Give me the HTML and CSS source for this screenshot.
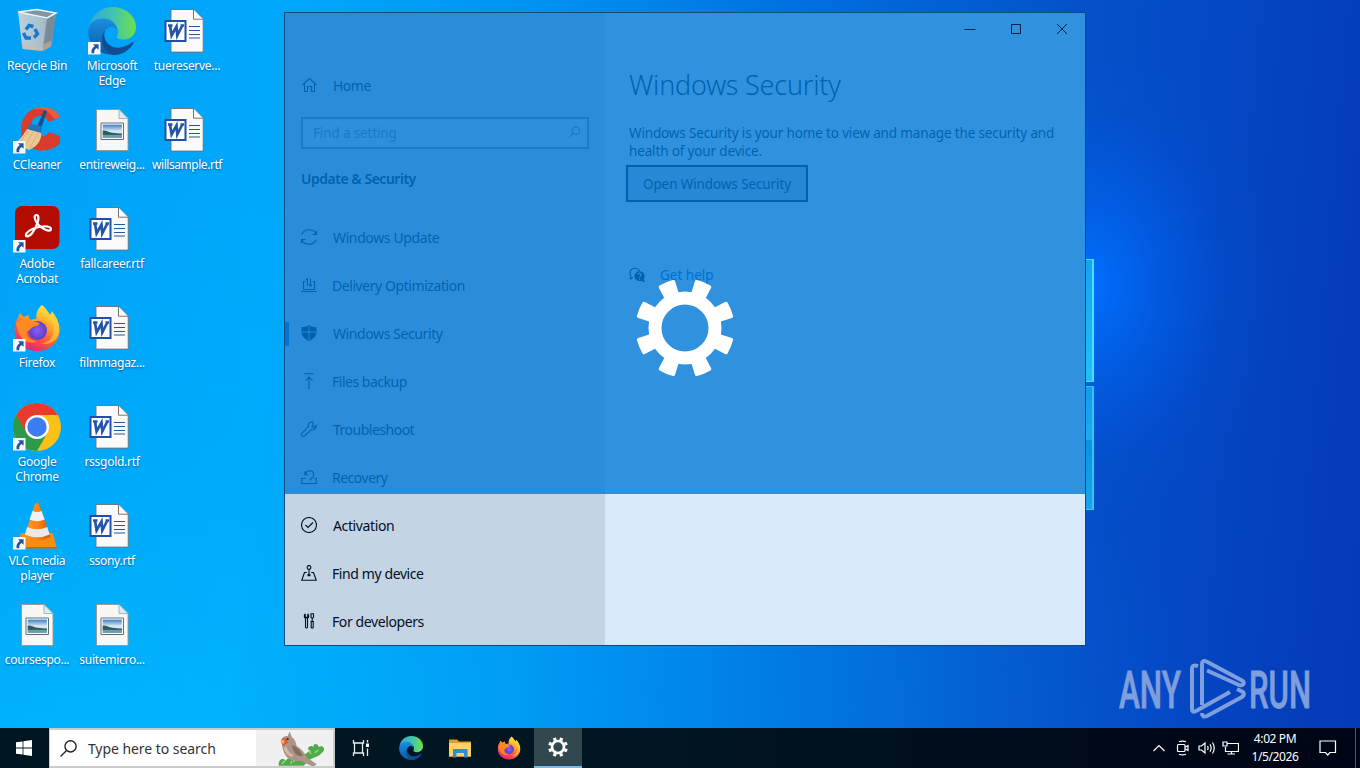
FILE: index.html
```html
<!DOCTYPE html>
<html lang="en">
<head>
<meta charset="utf-8">
<title>Desktop</title>
<link rel="stylesheet" href="styles.css">
</head>
<body>
<svg class="defs" width="0" height="0">
  <defs>
    <linearGradient id="edgeA" x1="0" y1="0" x2="1" y2="0"><stop offset="0" stop-color="#2fa8dc"/><stop offset=".5" stop-color="#3fc3b0"/><stop offset="1" stop-color="#6fe04c"/></linearGradient>
    <linearGradient id="edgeB" x1="0" y1="0" x2="0" y2="1"><stop offset="0" stop-color="#1b8de2"/><stop offset="1" stop-color="#0c59a4"/></linearGradient>
    <linearGradient id="fox" x1=".8" y1="0" x2=".3" y2="1"><stop offset="0" stop-color="#fff04a"/><stop offset=".35" stop-color="#ffb02a"/><stop offset=".65" stop-color="#ff5b36"/><stop offset="1" stop-color="#e5207c"/></linearGradient>
    <radialGradient id="globe"><stop offset="0" stop-color="#8f5cf5"/><stop offset="1" stop-color="#5a3ec8"/></radialGradient>
    <linearGradient id="cone" x1="0" y1="0" x2="1" y2="0"><stop offset="0" stop-color="#ff9a1c"/><stop offset=".5" stop-color="#ff8410"/><stop offset="1" stop-color="#c95a06"/></linearGradient>
    <linearGradient id="sky" x1="0" y1="0" x2="0" y2="1"><stop offset="0" stop-color="#3d7fc4"/><stop offset=".5" stop-color="#dceaf3"/><stop offset="1" stop-color="#9cc4d8"/></linearGradient>
    <linearGradient id="bin" x1="0" y1="0" x2="1" y2="0"><stop offset="0" stop-color="#c9d3da"/><stop offset=".65" stop-color="#b5c0c9"/><stop offset="1" stop-color="#8796a3"/></linearGradient>
  </defs>
  <symbol id="arrow" viewBox="0 0 13 13">
    <path d="M0 0h12.500v12.500H0z" fill="#f6f8fa"/>
    <path d="M5 2.200h5.600v5.600L8.700 5.900C6.500 7.300 6 8.800 6.300 11.200H3.600C2.900 8.300 4.200 5.900 6.800 4z" fill="#24549c"/>
  </symbol>
  <symbol id="word" viewBox="0 0 48 48">
    <path d="M8 2.500h22.500l9.700 9.700v32.900H8z" fill="#fafafa" stroke="#6b6f74" stroke-width=".9"/>
    <path d="M30.500 2.500v9.700h9.700" fill="#fff" stroke="#70605f" stroke-width=".9"/>
    <path d="M26 19.500h11M26 23.500h11M26 27.500h11M26 31h11" stroke="#2a5699" stroke-width="1.200"/>
    <path d="M2.500 14h20v20h-20z" fill="#fff" stroke="#1f4fa8" stroke-width="2"/>
    <path d="M5 18.500h4.500M7 18.500l1.600 10L13.500 19.500l.8 9 5-10M17.500 18.500h3.500" fill="none" stroke="#2455a8" stroke-width="2.700"/>
  </symbol>
  <symbol id="picture" viewBox="0 0 48 48">
    <path d="M8.500 3.500h22.500l9 9v32H8.500z" fill="#f8f7f6" stroke="#9c948c" stroke-width=".9"/>
    <path d="M31 3.500l9 9h-9z" fill="#ddeaf0" stroke="#8eb3c0" stroke-width=".9"/>
    <path d="M13 17h22.500v16.500H13z" fill="#fff" stroke="#5d6d7c" stroke-width="1"/>
    <path d="M14.700 18.600h19.200v13.300H14.700z" fill="url(#sky)"/>
    <path d="M14.700 24.500c4-.4 6 2 9.500 2.300 3.500.4 6 .8 9.700.8v1.300H14.700z" fill="#2c5f58"/>
    <path d="M14.700 28.900h19.200v3H14.700z" fill="#6d9bb5"/>
  </symbol>
  <symbol id="edge" viewBox="0 0 48 48">
    <path d="M1 21C3 8 13 0 24.500 0 38 0 48 9.500 48 20c0 8-6 12.500-12 12.500-4 0-8-1.200-7-3.300 2.200-4.700 1-11-5-12.800C14 13.300 5 14 1 21z" fill="url(#edgeA)"/>
    <path d="M.3 24C1 15 8.500 11 16 11.500c8 .5 13 6 13 11.500-2-4-9-5-12 1-4 8 3 20 13 22.500-3 1-6 1.300-9 1C8.500 46 0 36 .3 24z" fill="url(#edgeB)"/>
    <path d="M17 23c-3.500 11 6 19 15 17.500 5-.7 9-2.700 12-5.300 1-.8 2 0 1.300 1.200C41 44 33 48 25.500 48 16 46 10.500 34 17 23z" fill="#114c93"/>
  </symbol>
  <symbol id="firefox" viewBox="0 0 48 48">
    <path d="M29 1c4 3 6 6.500 7.500 10 2-1 2-3 2-4C44 13 47 20 46.500 27 46 39 36 47 24 47S1.500 38 1.500 26c0-6 1.500-10 4-13l.5-3.500c2 .5 3.500 1.800 4.500 3.500l5-2c0 2 1 3.500 2 5 2-.5 4-1 6-1C22.500 10 25 4 29 1z" fill="url(#fox)"/>
    <circle cx="24.500" cy="26.500" r="9.500" fill="url(#globe)"/>
    <path d="M3 19c5-4 12-4 16-1 3-.5 7 0 7.500 2-1 2-5 2-7 3.200-2 1.300-3 4-6 3.800-.5 5 3.500 10 10.500 10.500C13 41 6 35 3 19z" fill="#ff8a24"/>
    <path d="M24 16c5-2 11 2 12 8-1-2-3-4-5-4-2-2-4-3-7-4z" fill="#ff9d2e"/>
    <path d="M30 2c1 8 11 13 11 23 0 8-6 14-13 15 12 1 18-6 18-15C46 14 35 10 30 2z" fill="#ffd23b" opacity=".65"/>
  </symbol>
  <symbol id="gear" viewBox="-50 -50 100 100">
    <circle r="30" fill="none" stroke="currentColor" stroke-width="13"/>
    <g fill="currentColor">
      <path id="tooth" d="M-7.500-34L-8.700-47q-.2-1.800 1.500-2Q0-50 7.200-49q1.700.2 1.500 2L7.500-34z" transform="rotate(22.500)"/>
      <use href="#tooth" transform="rotate(45)"/><use href="#tooth" transform="rotate(90)"/><use href="#tooth" transform="rotate(135)"/><use href="#tooth" transform="rotate(180)"/><use href="#tooth" transform="rotate(225)"/><use href="#tooth" transform="rotate(270)"/><use href="#tooth" transform="rotate(315)"/>
    </g>
  </symbol>
</svg>

<div class="screen">
  <div class="panes"><i></i><i></i></div>

  <main class="workspace">
    <div class="icons">
      <div class="item"><svg class="pic" viewBox="0 0 48 48">
        <path d="M5 5l4.500 37 20 2 9-4.500L43 7 34 12z" fill="url(#bin)" opacity=".93"/><path d="M34 12l9-5-4.500 32.500-9 4.500z" fill="#788b9b"/>
        <path d="M5 5L24 2.500 43 6l-9 5z" fill="#7f97a5" stroke="#f0f4f6" stroke-width="1.500"/>
        <path d="M9.500 37l20.500 3 .8-3 8-3.500-.8 6-8.500 4.500-19.500-2z" fill="#d9b99c" opacity=".5"/>
        <g fill="none" stroke="#1978c8" stroke-width="3.400"><path d="M13 22.500l3-4 4.500 1M22 22l2.500 5-3.500 3.500M18 31h-5l-2.500-5"/></g></svg><span>Recycle Bin</span></div>
      <div class="item"><svg class="pic" viewBox="0 0 48 48"><path d="M47 11C42 1 29-2 19 4 7 10 5 27 12 37c7 9 25 11 35 0v-7l-11-4c-3 6-13 6-16-1-4-7 0-15 7-15 4 0 7 2 9 6z" fill="#d93b2d"/><path d="M47 11C42 1 29-2 19 4c9-3 17 0 22 9z" fill="#ee5b43"/><path d="M31 4l3 1-6 18-4-2z" fill="#174f85"/><path d="M16 18l13 2-1 7-14-3z" fill="#2574b8"/><path d="M14 23l14 4c1 8-5 14-12 17L1 37c7-3 9-8 13-14z" fill="#eac795"/><path d="M16 25L5 38M20 26l-9 15M25 27l-8 15" stroke="#d3ac78" stroke-width=".8"/></svg><svg class="link"><use href="#arrow"/></svg><span>CCleaner</span></div>
      <div class="item"><svg class="pic" viewBox="0 0 48 48"><rect x="2" y="1" width="44.500" height="43" rx="7" fill="#b30b00"/><path d="M13 31c-1-4 7-8 13-9 6-1 12-1 12 2 0 4-10 0-14-6-3-4-3-8-.5-8s2.500 5 .5 9c-2 6-7 14-11 12z" fill="none" stroke="#fff" stroke-width="2.200"/></svg><svg class="link"><use href="#arrow"/></svg><span>Adobe Acrobat</span></div>
      <div class="item"><svg class="pic"><use href="#firefox"/></svg><svg class="link"><use href="#arrow"/></svg><span>Firefox</span></div>
      <div class="item"><svg class="pic" viewBox="0 0 48 48"><circle cx="24" cy="24" r="24" fill="#fbc116"/><path d="M3.200 12A24 24 0 0 0 24 48l10.400-18z" fill="#2d9a48"/><path d="M3.200 12A24 24 0 0 1 44.800 12H24l-10.400 18z" fill="#ea3a2e"/><circle cx="24" cy="24" r="12" fill="#fff"/><circle cx="24" cy="24" r="9.700" fill="#3a7df0"/></svg><svg class="link"><use href="#arrow"/></svg><span>Google Chrome</span></div>
      <div class="item"><svg class="pic" viewBox="0 0 48 48"><path d="M8 31h32l3.500 14.500H4z" fill="#f78c12"/><path d="M4 45h40v1.500H4z" fill="#c66a08"/><path d="M22 2q2-2 4 0l11.500 33q-13 7-26 0z" fill="url(#cone)"/><path d="M19.500 9q4.500 2 9 0l3.200 8.500q-7.500 3.500-15.200 0z" fill="#f1f1f1"/><path d="M14.200 25q10 4.500 20 0l2.600 7.500q-12.500 5.500-25 0z" fill="#e9e9e9"/></svg><svg class="link"><use href="#arrow"/></svg><span>VLC media player</span></div>
      <div class="item"><svg class="pic"><use href="#picture"/></svg><span>coursespo...</span></div>

      <div class="item"><svg class="pic"><use href="#edge"/></svg><svg class="link"><use href="#arrow"/></svg><span>Microsoft Edge</span></div>
      <div class="item"><svg class="pic"><use href="#picture"/></svg><span>entireweig...</span></div>
      <div class="item"><svg class="pic"><use href="#word"/></svg><span>fallcareer.rtf</span></div>
      <div class="item"><svg class="pic"><use href="#word"/></svg><span>filmmagaz...</span></div>
      <div class="item"><svg class="pic"><use href="#word"/></svg><span>rssgold.rtf</span></div>
      <div class="item"><svg class="pic"><use href="#word"/></svg><span>ssony.rtf</span></div>
      <div class="item"><svg class="pic"><use href="#picture"/></svg><span>suitemicro...</span></div>

      <div class="item"><svg class="pic"><use href="#word"/></svg><span>tuereserve...</span></div>
      <div class="item"><svg class="pic"><use href="#word"/></svg><span class="snug">willsample.rtf</span></div>
    </div>
  </main>

  <section class="window">
    <aside class="sidebar">
      <div class="nav home"><svg viewBox="0 0 16 16"><path d="M1.500 8L8.500 1.500 15.500 8M3.500 6.500v8h3V9.500h4v5h3v-8"/></svg><span class="w-home">Home</span></div>
      <div class="find"><span>Find a setting</span><svg viewBox="0 0 16 16"><circle cx="9.500" cy="6" r="4"/><path d="M6.500 9L2 13.500"/></svg></div>
      <h2>Update &amp; Security</h2>
      <div class="nav"><svg viewBox="0 0 16 16"><path d="M.8 5.500C2 2.500 5 .8 8 .8c3.200 0 6 1.800 7 4.200M15.500 1.500v4h-4M15.200 10.500c-1.200 3-4.200 4.700-7.200 4.700-3.200 0-6-1.800-7-4.200M.5 14.500v-4h4"/></svg><span class="w-update">Windows Update</span></div>
      <div class="nav"><svg viewBox="0 0 16 16"><path d="M4.500 4.500H2.500v8h11v-8H12M.5 14.500h15M6.500 9V1.500M4.800 3.200L6.500 1.500M9.500 1.500V9M11 7.500L9.500 9.200 8 7.500"/></svg><span class="w-delivery">Delivery Optimization</span></div>
      <div class="nav current"><svg viewBox="0 0 16 16"><path class="solid" d="M8 0c2 1.500 4.500 2.200 7.500 2.200V7c0 4-3 6.800-7.500 9C3.500 13.800.5 11 .5 7V2.200C3.500 2.200 6 1.500 8 0z"/><path class="cut" d="M8 1v14M1 7h14"/></svg><span class="w-sec">Windows Security</span></div>
      <div class="nav"><svg viewBox="0 0 16 16"><path d="M3.500.8h9M8 16V4M4.500 7.500L8 4l3.500 3.500"/></svg><span class="w-files">Files backup</span></div>
      <div class="nav"><svg viewBox="0 0 16 16"><path d="M11.500.7c-3 0-4.800 2.300-4 5L1 12.200c-1.500 1.800.8 4.300 2.700 2.700L10.200 8.500c2.800.8 5.300-1.200 5.100-4L13 6.500l-2.200-.8L12.500 3.500z"/></svg><span class="w-trouble">Troubleshoot</span></div>
      <div class="nav"><svg viewBox="0 0 16 16"><path d="M4.500 9.500H.7v5h14.600v-5H13M.7 14.500v-5M4 2v3.800h3.500M4.500 5C5.500 2.300 7.500 1.500 9.500 1.800c3 .4 4.500 4 2.300 6.300L8.500 11.500"/></svg><span class="w-recovery">Recovery</span></div>
      <div class="nav"><svg viewBox="0 0 16 16"><circle cx="8" cy="8" r="7.500"/><path d="M4.500 8L7 10.500l5-5"/></svg><span class="w-act">Activation</span></div>
      <div class="nav"><svg viewBox="0 0 16 16"><circle cx="8" cy="2.500" r="1.900"/><path d="M8 4.500v6M5.800 7.500H3.500L.8 15.200h14.400L12.500 7.500h-2.300M6.500 9.500L8 11l1.500-1.500"/></svg><span class="w-find">Find my device</span></div>
      <div class="nav"><svg viewBox="0 0 16 16"><path d="M4.200.8v3l1.300 1 1.300-1v-3M4.200 1C2.700 2.500 3.200 4.800 4.500 5.500v9q1 1.200 2 0v-9C7.800 4.800 8.300 2.500 6.800 1M10 .8h2.500v3.500l-1.200 1.200L10 4.300zM11.200 5.500v3M9.500 8.500h3.500M10.200 8.500v6q1 1 2 0v-6"/></svg><span class="w-dev">For developers</span></div>
    </aside>
    <div class="content">
      <h1>Windows Security</h1>
      <p><span class="w-line1">Windows Security is your home to view and manage the security and</span><br><span class="w-line2">health of your device.</span></p>
      <div class="button"><span class="w-open">Open Windows Security</span></div>
      <div class="help"><svg viewBox="0 0 16 16"><path d="M4 10.500L1.500 12l.3-3C-.5 5.500 2 1.200 6 1.200c2 0 3.800 1 4.800 2.500"/><path class="solid" d="M10.500 4.200a5 5 0 0 0-5 5c0 3.700 3.500 5.600 7 4.700l3.300 1.700-1-3.500c2.200-3.800-.4-7.900-4.300-7.900z"/><path class="cut" d="M8.800 7.500c.5-1.800 3.500-1.500 3.300.3 0 1-1.500 1.200-1.500 2.400M10.600 11.300v1.200"/></svg><span class="w-help">Get help</span></div>
    </div>
    <div class="splash"><svg class="cog"><use href="#gear"/></svg></div>
    <div class="caption">
      <svg viewBox="0 0 12 12"><path d="M.5 6.500h11"/></svg>
      <svg viewBox="0 0 12 12"><path d="M1.500 1.500h9v9h-9z"/></svg>
      <svg viewBox="0 0 12 12"><path d="M1 1l10 10M11 1L1 11"/></svg>
    </div>
  </section>

  <svg class="mark" viewBox="0 0 204 64">
    <g fill="currentColor" stroke="currentColor" stroke-width=".8">
      <text x="1" y="51.500" textLength="62" lengthAdjust="spacingAndGlyphs">ANY</text>
      <text x="131" y="51.500" textLength="62" lengthAdjust="spacingAndGlyphs">RUN</text>
    </g>
    <g fill="none" stroke="currentColor" stroke-width="4" stroke-linejoin="round">
      <path d="M84 49V8q0-4.500 4.500-2.500L124 24.500q3 2 1 4-2 1.500-5 0L89 14.500"/>
      <path d="M80 10q-6-2-6 3V53q0 4 4 2L112 36"/>
      <path d="M84 57q0 5 5 3L124 41q3-2.500 1-5L119 33"/>
    </g>
  </svg>

  <footer class="taskbar">
    <div class="start"><svg viewBox="0 0 16 16"><path d="M0 2.300l6.600-.9v6.200H0zM7.400 1.300L16 0v7.600H7.400zM0 8.400h6.600v6.200L0 13.700zM7.400 8.400H16V16l-8.600-1.200z"/></svg></div>
    <div class="search">
      <svg class="lens" viewBox="0 0 16 16"><circle cx="10" cy="6" r="5.300"/><path d="M6.200 9.800L.5 15.500"/></svg>
      <span>Type here to search</span>
      <svg class="bird" viewBox="0 0 78 36">
        <path d="M0 0h78v36H0z" fill="#f1f0f1"/>
        <path d="M23 36c-1-6 4-9 7-5 2-4 7-3 8 1l3-2 13-9c-4-3 1-7 4-4-1-4 5-4 5 0 5-3 8 3 3 6-2 4-9 4-13 8l-5 5z" fill="#4fa94d"/>
        <path d="M26 14c-2-5 1-8 6-8l2-5 2 6c3 2 4 5 5 9 5 3 8 7 11 12l9 6-3 3-13-6c-8 1-17-1-19-17z" fill="#ac9488"/>
        <path d="M36 15c6 2 9 6 11 11-5 1-9-2-11-11z" fill="#856b62"/><path d="M26 9l5-1 1 5-5 3z" fill="#d65b34"/><path d="M24 11l5-1-1 4z" fill="#f2bb4e"/><circle cx="32" cy="9" r="1" fill="#222"/><path d="M29 17q2 7 8 9" fill="none" stroke="#d6b9a5" stroke-width="3"/>
        <path d="M26 34l3-3M35 34l1-3M59 23l4-3M55 24l-1-4" stroke="#9ad773" stroke-width="1.500"/>
      </svg>
    </div>
    <div class="apps">
      <div class="app"><svg class="view" viewBox="0 0 18 18"><path d="M1.500 1v3h10V1M1.500 17v-3h10v3M2.500 4v10M10.500 4v10M15.500 1v2.500M15.500 9.500V17"/><path class="fill" d="M14 4.500h3v3.500h-3z"/></svg></div>
      <div class="app"><svg class="big"><use href="#edge"/></svg></div>
      <div class="app"><svg class="folder" viewBox="0 0 24 20"><path d="M1 1.500h8l2 2h12v15H1z" fill="#e3992b"/><path d="M1 5h22v13.500H1z" fill="#ffd266"/><path d="M5 11h14.500v8.500h-3.500V15H8.500v4.500H5z" fill="#2d8fd2"/></svg></div>
      <div class="app"><svg class="big"><use href="#firefox"/></svg></div>
      <div class="app active"><svg class="small"><use href="#gear"/></svg></div>
    </div>
    <div class="tray">
      <svg class="up" viewBox="0 0 14 14"><path d="M1.500 10L7 4.500l5.500 5.500"/></svg>
      <svg class="meet" viewBox="0 0 14 16"><path d="M2.500 4.500h5.500q1 0 1 1v5q0 1-1 1H2.500q-1 0-1-1v-5q0-1 1-1zM9.500 7l2.500-1.500v5L9.500 9M3 1.800q3.500-1.500 7 0M3 14.200q3.500 1.500 7 0" /></svg>
      <svg class="vol" viewBox="0 0 18 14"><path d="M1 5h2.500L7 2v10L3.500 9H1zM9.500 5q1.200 2 0 4M12 3.200q2.300 3.800 0 7.600M14.500 1.500q3.500 5.500 0 11"/></svg>
      <svg class="net" viewBox="0 0 17 14"><path d="M5.500 2.500h11v8H3.500V6M1 1h4v4H1zM9.500 10.500v2.500M5.500 13h7.500"/></svg>
      <div class="clock"><span class="time">4:02 PM</span><span class="date">1/5/2026</span></div>
      <svg class="note" viewBox="0 0 18 17"><path d="M1 1h15.500v11.500h-5.500L8.700 15l-2.200-2.500H1z"/></svg>
    </div>
    <div class="peek"></div>
  </footer>
</div>
</body>
</html>
```
FILE: styles.css
```css
* { box-sizing: border-box; }
body { margin: 0; font-family: "Noto Sans", "Open Sans", sans-serif; }
.defs { position: absolute; }
.screen {
  position: relative; width: 1360px; height: 768px; overflow: hidden;
  display: flex; flex-direction: column;
  background:
    radial-gradient(ellipse 190px 240px at 1086px 285px, rgba(0,112,255,.95), rgba(0,102,245,.5) 40%, rgba(0,90,225,.15) 72%, rgba(0,80,220,0)),
    radial-gradient(ellipse 1150px 560px at 60px 740px, rgba(0,190,255,.55), rgba(0,180,255,.3) 50%, rgba(0,150,240,0)),
    linear-gradient(95deg, #00a1f6 0, #00a8fb 290px, #0092f0 540px, #006fe0 800px, #0453ca 1060px, #0449c6 1200px, #043bb8 1400px);
}
.workspace { flex: 1; min-height: 0; }
.icons { display: grid; grid-auto-flow: column; grid-template-rows: repeat(7, 99px); grid-auto-columns: 75px; padding-top: 7px; width: 225px; }
.item { position: relative; display: flex; flex-direction: column; align-items: center; color: #fff; font-size: 12px; line-height: 15px; text-align: center; width: 74px; letter-spacing: -.28px; }
.item span { margin-top: 3px; text-shadow: 0 1px 2px rgba(0,40,90,.6); width: 74px; white-space: normal; }
.item .snug { letter-spacing: -.45px; }
.pic { width: 48px; height: 48px; display: block; }
.link { position: absolute; left: 13px; top: 35px; width: 13px; height: 13px; }

.panes { position: absolute; left: 1080px; top: 259px; width: 14px; display: flex; flex-direction: column; gap: 4px; }
.panes i { height: 123px; background: linear-gradient(#18a2f0, #20bff8); border: 2px solid #3fe4ff; border-width: 1px 2px 1px 0; }
.panes i + i { height: 124px; background: linear-gradient(#149aee, #20a8f0 43%, #0c90e6 44%, #18a6ea); border-color: #30c8f0; }

.window { position: absolute; left: 284px; top: 12px; width: 802px; height: 634px; border: 1px solid #084c84; background: #d8e9f9; display: flex; color: #00101f; }
.sidebar { width: 320px; background: #c4d4e5; padding-top: 49px; overflow: hidden; }
.nav { position: relative; height: 48px; padding: 0 0 2px 16px; display: flex; align-items: center; gap: 15px; font-size: 14px; white-space: nowrap; }
.nav svg, .help svg { width: 16px; height: 16px; flex: none; }
.sidebar svg, .help svg, .caption svg { fill: none; stroke: currentColor; stroke-width: 1.1; }
.sidebar svg .solid, .help svg .solid { fill: currentColor; stroke: none; }
.sidebar svg .cut { stroke: #c4d4e5; stroke-width: .9; }
.help svg .cut { stroke: #d8e9f9; stroke-width: 1.200; }
.nav span { padding-top: 1px; letter-spacing: -.4px; }
.nav .w-home { margin-left: 1px; letter-spacing: -.5px; }
.nav .w-update { margin-left: 1px; letter-spacing: -.38px; }
.nav .w-delivery { letter-spacing: -.43px; }
.nav .w-sec, .nav .w-trouble { margin-left: 1px; }
.nav .w-trouble, .nav .w-recovery { letter-spacing: -.5px; }
.nav .w-files { letter-spacing: -.48px; }
.nav .w-act { margin-left: 1px; letter-spacing: -.38px; }
.current::before { content: ""; position: absolute; left: 0; top: 12px; width: 4px; height: 24px; background: #0067c0; }
.find { margin: 7px 0 0 16px; width: 288px; height: 32px; border: 2px solid #6d8aa6; background: #d0dfee; display: flex; justify-content: space-between; align-items: center; padding: 0 5px 1px 10px; font-size: 13.500px; letter-spacing: -.15px; color: #6a7f94; }
.find svg { width: 15px; height: 15px; }
h2 { margin: 6px 0 11px; height: 48px; padding-left: 16px; font-size: 14px; line-height: 48px; font-weight: 600; letter-spacing: -.48px; }
.content { flex: 1; padding: 53px 0 0 22px; }
h1 { margin: 0 0 0 2px; font-size: 27px; font-weight: 300; line-height: 38px; white-space: nowrap; letter-spacing: -.22px; }
.content p { margin: 20px 0 0 2px; font-size: 13.500px; line-height: 18px; white-space: nowrap; letter-spacing: -.15px; }
.button { margin: 5px 0 0 -1px; width: 182px; height: 37px; border: 2px solid #00101f; background: #acbfd2; display: flex; align-items: center; justify-content: center; font-size: 13.500px; letter-spacing: -.1px; }
.help { margin: 63px 0 0 2px; display: flex; align-items: center; gap: 15px; font-size: 13.500px; line-height: 20px; }
.help span { color: #0050a0; }
.splash { position: absolute; left: 0; top: 0; width: 800px; height: 481px; background: rgba(0,120,215,.78); }
.cog { position: absolute; left: 350px; top: 265px; width: 100px; height: 100px; color: #fff; }
.caption { position: absolute; right: 17px; top: 10px; display: flex; gap: 34px; color: #002048; }
.caption svg { width: 12px; height: 12px; stroke-width: 1; }

.mark { position: absolute; left: 1118px; top: 656px; width: 204px; height: 64px; color: #7f9fdc; overflow: visible; }
.mark text { font-family: Roboto, sans-serif; font-size: 51px; font-weight: 500; }

.taskbar { height: 40px; display: flex; color: #fff; background: linear-gradient(90deg, #001722, #001520 50%, #000a1a 80%, #000515); }
.start { width: 49px; padding-right: 1px; display: flex; align-items: center; justify-content: center; }
.start svg { width: 16px; height: 16px; fill: #fff; }
.search { width: 286px; border: 2px solid #c9cbcd; border-width: 2px 2px 2px 1px; background: #fff; display: flex; align-items: center; color: #333; white-space: nowrap; }
.search span { width: 169px; margin-left: 11px; font-size: 14px; letter-spacing: -.05px; }
.lens { width: 17px; height: 17px; margin-left: 10px; fill: none; stroke: #222; stroke-width: 1.300; }
.bird { width: 78px; height: 36px; display: block; }
.apps { display: flex; padding-left: 1px; }
.app { width: 49.300px; display: flex; align-items: center; justify-content: center; }
.app:first-child { width: 50px; }
.view { width: 18px; height: 18px; fill: none; stroke: #e8eef0; stroke-width: 1.300; }
.view .fill { fill: #fff; stroke: none; }
.big { width: 24px; height: 24px; }
.folder { width: 24px; height: 20px; }
.small { width: 20px; height: 20px; }
.app.active { width: 48px; background: #33474f; border-bottom: 2px solid #76b9ed; }
.tray { margin-left: auto; display: flex; align-items: center; }
.tray > svg { fill: none; stroke: #fff; stroke-width: 1.200; }
.up { width: 14px; height: 14px; margin-right: 10px; }
.meet { width: 14px; height: 16px; margin-right: 8px; }
.vol { width: 18px; height: 14px; margin-right: 6px; }
.net { width: 17px; height: 14px; margin-right: 3px; }
.clock { width: 66px; display: flex; flex-direction: column; align-items: center; font-size: 12px; line-height: 18px; letter-spacing: -.4px; white-space: nowrap; }
.note { width: 18px; height: 17px; margin: 0 0 0 11px; }
.peek { width: 5px; margin-left: 18px; border-left: 1px solid #4a5560; }
```
